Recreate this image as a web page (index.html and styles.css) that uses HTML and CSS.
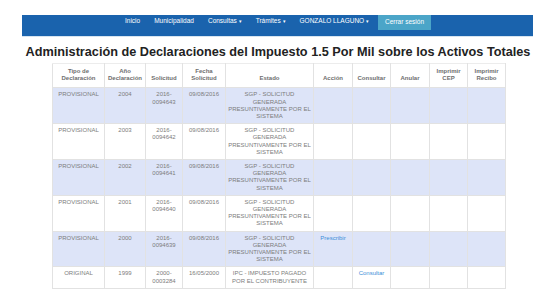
FILE: index.html
```html
<!DOCTYPE html>
<html lang="es">
<head>
<meta charset="utf-8">
<title>Declaraciones</title>
<link rel="stylesheet" href="styles.css">
</head>
<body>
<nav class="navbar">
  <ul class="nav">
    <li><a href="#">Inicio</a></li>
    <li><a href="#">Municipalidad</a></li>
    <li><a href="#">Consultas <span class="caret">▾</span></a></li>
    <li><a href="#">Trámites <span class="caret">▾</span></a></li>
    <li><a href="#">GONZALO LLAGUNO <span class="caret">▾</span></a></li>
    <li><a href="#" class="btn-logout">Cerrar sesión</a></li>
  </ul>
</nav>
<h1 class="title">Administración de Declaraciones del Impuesto 1.5 Por Mil sobre los Activos Totales</h1>
<table class="grid">
  <colgroup>
    <col style="width:52px"><col style="width:41px"><col style="width:37px"><col style="width:43px"><col style="width:88px">
    <col style="width:39px"><col style="width:38px"><col style="width:39px"><col style="width:38px"><col style="width:38px">
  </colgroup>
  <thead>
    <tr>
      <th>Tipo de Declaración</th><th>Año Declaración</th><th>Solicitud</th><th>Fecha Solicitud</th><th>Estado</th>
      <th>Acción</th><th>Consultar</th><th>Anular</th><th>Imprimir CEP</th><th>Imprimir Recibo</th>
    </tr>
  </thead>
  <tbody>
    <tr class="alt">
      <td>PROVISIONAL</td><td>2004</td><td>2016-<br>0094643</td><td>09/08/2016</td><td>SGP - SOLICITUD GENERADA PRESUNTIVAMENTE POR EL SISTEMA</td>
      <td></td><td></td><td></td><td></td><td></td>
    </tr>
    <tr>
      <td>PROVISIONAL</td><td>2003</td><td>2016-<br>0094642</td><td>09/08/2016</td><td>SGP - SOLICITUD GENERADA PRESUNTIVAMENTE POR EL SISTEMA</td>
      <td></td><td></td><td></td><td></td><td></td>
    </tr>
    <tr class="alt">
      <td>PROVISIONAL</td><td>2002</td><td>2016-<br>0094641</td><td>09/08/2016</td><td>SGP - SOLICITUD GENERADA PRESUNTIVAMENTE POR EL SISTEMA</td>
      <td></td><td></td><td></td><td></td><td></td>
    </tr>
    <tr>
      <td>PROVISIONAL</td><td>2001</td><td>2016-<br>0094640</td><td>09/08/2016</td><td>SGP - SOLICITUD GENERADA PRESUNTIVAMENTE POR EL SISTEMA</td>
      <td></td><td></td><td></td><td></td><td></td>
    </tr>
    <tr class="alt">
      <td>PROVISIONAL</td><td>2000</td><td>2016-<br>0094639</td><td>09/08/2016</td><td>SGP - SOLICITUD GENERADA PRESUNTIVAMENTE POR EL SISTEMA</td>
      <td><a href="#" class="link">Prescribir</a></td><td></td><td></td><td></td><td></td>
    </tr>
    <tr>
      <td>ORIGINAL</td><td>1999</td><td>2000-<br>0003284</td><td>16/05/2000</td><td>IPC - IMPUESTO PAGADO POR EL CONTRIBUYENTE</td>
      <td></td><td><a href="#" class="link">Consultar</a></td><td></td><td></td><td></td>
    </tr>
  </tbody>
</table>
</body>
</html>
```
FILE: styles.css
```css
html, body {
  margin: 0;
  padding: 0;
  background: #ffffff;
  font-family: "Liberation Sans", Arial, sans-serif;
}
.navbar {
  margin: 15px 0 0 22px;
  width: 511px;
  height: 21px;
  background: #1a63ad;
  border-bottom: 1px solid #d6e4f0;
}
.nav {
  list-style: none;
  margin: 0;
  padding: 0 0 0 103px;
  display: flex;
  align-items: flex-start;
  gap: 14px;
}
.nav a {
  display: block;
  color: #ffffff;
  text-decoration: none;
  font-size: 6.5px;
  line-height: 9px;
  padding-top: 1px;
  white-space: nowrap;
}
.caret {
  font-size: 5px;
}
.nav a.btn-logout {
  background: #4ba5c8;
  height: 15px;
  line-height: 13px;
  padding: 0 7px;
  margin-left: -5px;
}
.title {
  margin: 7px 0 0 0;
  text-align: center;
  font-size: 12.7px;
  line-height: 16px;
  font-weight: bold;
  color: #222;
}
.grid {
  margin: 3px 0 0 52px;
  width: 453px;
  border-collapse: collapse;
  table-layout: fixed;
  font-size: 6px;
  line-height: 7.2px;
  color: #7c7c7c;
}
.grid th, .grid td {
  border: 1px solid #e2e2e2;
  padding: 3px 2px;
  text-align: center;
  vertical-align: top;
}
.grid thead th {
  border-top: 1px solid #ececec;
  vertical-align: bottom;
  font-weight: bold;
  color: #6e6e6e;
  padding-top: 4px;
  padding-bottom: 5px;
}
.grid tr.alt td {
  background: #dde4f8;
}
.link {
  color: #3b8ed8;
  text-decoration: none;
}
```
